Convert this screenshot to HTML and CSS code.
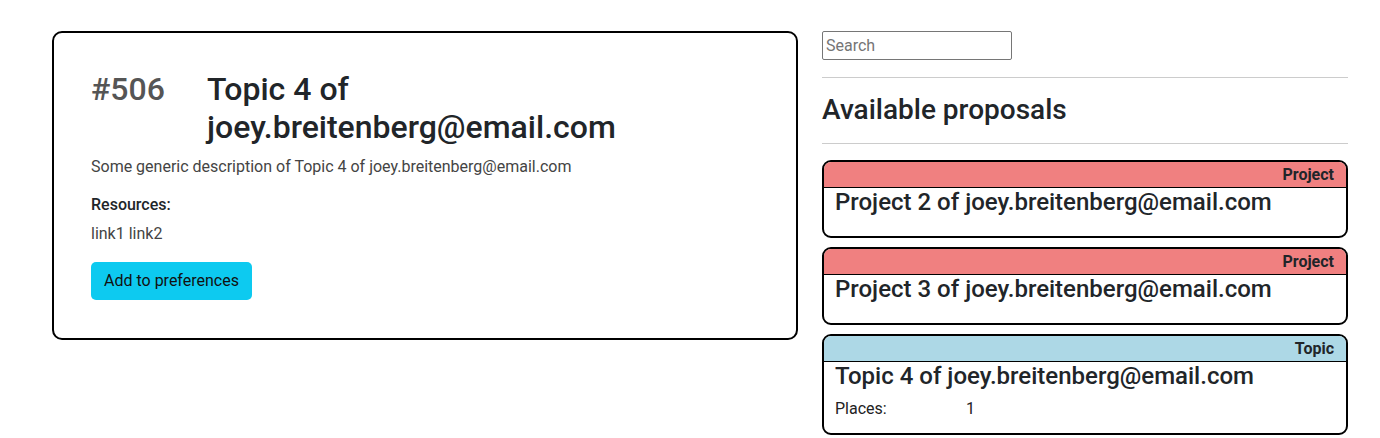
FILE: index.html
```html
<!DOCTYPE html>
<html>
<head>
<meta charset="utf-8">
<link rel="stylesheet" href="styles.css">
</head>
<body>
<div class="page">
  <main class="detail">
    <div class="detail-head">
      <span class="detail-id">#506</span>
      <h1 class="detail-title">Topic 4 of joey.breitenberg@email.com</h1>
    </div>
    <p class="detail-desc">Some generic description of Topic 4 of joey.breitenberg@email.com</p>
    <p class="detail-label">Resources:</p>
    <p class="detail-links">link1 link2</p>
    <button class="btn-add">Add to preferences</button>
  </main>
  <aside class="sidebar">
    <input class="search" type="text" placeholder="Search">
    <hr class="rule rule-top">
    <h2 class="side-title">Available proposals</h2>
    <hr class="rule rule-bottom">
    <div class="proposal">
      <div class="proposal-tag tag-project">Project</div>
      <div class="proposal-body">
        <h3 class="proposal-title">Project 2 of joey.breitenberg@email.com</h3>
      </div>
    </div>
    <div class="proposal">
      <div class="proposal-tag tag-project">Project</div>
      <div class="proposal-body">
        <h3 class="proposal-title">Project 3 of joey.breitenberg@email.com</h3>
      </div>
    </div>
    <div class="proposal">
      <div class="proposal-tag tag-topic">Topic</div>
      <div class="proposal-body">
        <h3 class="proposal-title">Topic 4 of joey.breitenberg@email.com</h3>
        <div class="proposal-meta"><span class="meta-key">Places:</span><span>1</span></div>
      </div>
    </div>
  </aside>
</div>
</body>
</html>
```
FILE: styles.css
```css
* { box-sizing: border-box; }
html, body { margin: 0; padding: 0; background: #fff; }
body {
  font-family: Roboto, "Liberation Sans", sans-serif;
  color: #212529;
  font-size: 16px;
}
.page {
  display: flex;
  align-items: flex-start;
  gap: 24px;
  padding: 31px 32px 0 52px;
}
.detail {
  width: 746px;
  flex: none;
  border: 2px solid #000;
  border-radius: 10px;
  padding: 37px 37px 38px 37px;
}
.detail-head {
  display: flex;
  align-items: flex-start;
}
.detail-id {
  font-size: 32px;
  line-height: 38px;
  font-weight: 500;
  color: #555;
  width: 116px;
  flex: none;
}
.detail-title {
  margin: 0;
  font-size: 32px;
  line-height: 38px;
  font-weight: 500;
  width: 460px;
  color: #212529;
}
.detail-desc {
  margin: 10px 0 0;
  color: #444;
  line-height: 22px;
}
.detail-label {
  margin: 16px 0 0;
  font-weight: 500;
  line-height: 22px;
}
.detail-links {
  margin: 7px 0 0;
  color: #444;
  line-height: 22px;
}
.btn-add {
  margin-top: 17px;
  display: block;
  font-family: inherit;
  font-size: 16px;
  line-height: 24px;
  padding: 7px 13px;
  background: #0dcaf0;
  border: none;
  border-radius: 5px;
  color: #111;
}
.sidebar {
  flex: 1;
  display: flex;
  flex-direction: column;
}
.search {
  width: 190px;
  height: 29px;
  font-family: inherit;
  font-size: 16px;
  padding: 1px 3px;
  border: 1px solid #767676;
  border-radius: 2px;
}
.search::placeholder { color: #757575; }
.rule {
  width: 100%;
  border: 0;
  border-top: 1px solid #ccc;
}
.rule-top { margin: 17px 0 0; }
.rule-bottom { margin: 15px 0 16px; }
.side-title {
  margin: 14px 0 0;
  font-size: 28px;
  line-height: 36px;
  font-weight: 500;
}
.proposal {
  border: 2px solid #000;
  border-radius: 9px;
  overflow: hidden;
  margin-bottom: 9px;
}
.proposal-tag {
  text-align: right;
  font-weight: 700;
  font-size: 16px;
  line-height: 24px;
  padding: 1px 12px 0;
  border-bottom: 1px solid #000;
}
.tag-project { background: #f08080; }
.tag-topic { background: #add8e6; }
.proposal-body {
  padding: 0 11px 13px;
  min-height: 48px;
}
.proposal-title {
  margin: 0;
  font-size: 24px;
  line-height: 29px;
  font-weight: 500;
}
.proposal-meta {
  display: flex;
  margin-top: 7px;
  line-height: 22px;
  color: #222;
}
.meta-key { width: 131px; }
```
